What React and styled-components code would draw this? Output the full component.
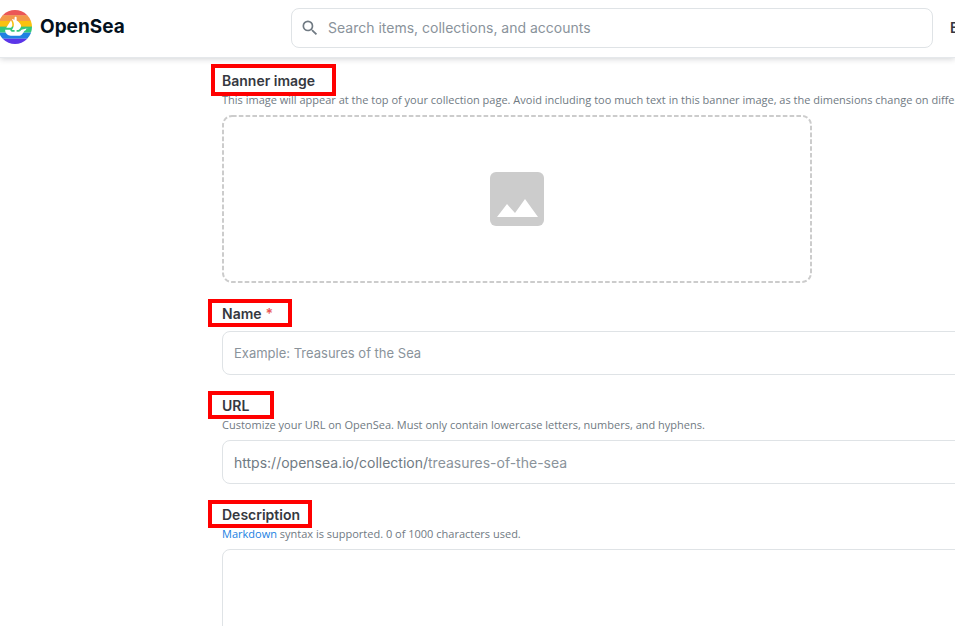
import React from "react";
import styled, { createGlobalStyle } from "styled-components";
import { MdSearch } from "react-icons/md";

const GlobalStyle = createGlobalStyle`
  * {
    box-sizing: border-box;
  }
  body {
    margin: 0;
    overflow: hidden;
    background-color: #ffffff;
    color: #353840;
    font-family: Inter, "Liberation Sans", sans-serif;
    font-size: 14px;
  }
`;

const StyledHeader = styled.header`
  display: flex;
  align-items: center;
  height: 58px;
  padding-bottom: 2px;
  border-bottom: 1px solid #e5e8eb;
  box-shadow: 0 1px 6px rgba(4, 17, 29, 0.18);
`;

const StyledBrand = styled.a`
  display: flex;
  align-items: center;
  flex: 0 0 291px;
  gap: 8px;
  margin-left: -2px;
  margin-right: 2px;
  padding-bottom: 2px;
  color: #04111d;
  font-size: 19px;
  font-weight: 700;
  text-decoration: none;
`;

const StyledSearchWrap = styled.label`
  display: flex;
  align-items: center;
  flex: 1;
  gap: 8px;
  height: 40px;
  padding: 0 8px;
  border: 1px solid #dfe3e6;
  border-radius: 8px;
  color: #707a83;
`;

const StyledInput = styled.input`
  flex: 1;
  min-width: 0;
  padding: 0;
  border: none;
  outline: none;
  background-color: transparent;
  color: #353840;
  font-family: inherit;
  font-size: ${({ $small }) => ($small ? 13 : 14)}px;
  &::placeholder {
    color: #8a939b;
    opacity: 1;
  }
`;

const StyledNav = styled.nav`
  flex: 0 0 22px;
  padding-left: 17px;
  overflow: hidden;
`;

const StyledNavLink = styled.a`
  color: #353840;
  font-weight: 600;
  text-decoration: none;
`;

const StyledMain = styled.main`
  padding: 6px 0 0 222px;
  overflow: hidden;
`;

const StyledForm = styled.form`
  display: flex;
  flex-direction: column;
  gap: 16px;
  min-width: 780px;
`;

const StyledField = styled.div`
  display: flex;
  flex-direction: column;
  align-items: flex-start;
`;

const StyledLabel = styled.label`
  position: relative;
  display: flex;
  align-items: center;
  gap: 4px;
  width: ${({ $width }) => $width}px;
  height: ${({ $tall }) => ($tall ? 32 : 28)}px;
  margin-left: ${({ $tall }) => ($tall ? -11 : -14)}px;
  padding-left: ${({ $tall }) => ($tall ? 7 : 10)}px;
  border: 4px solid #ff0000;
  font-weight: 600;
`;

const StyledRequired = styled.span`
  color: #eb5757;
`;

const StyledHelp = styled.p`
  margin: ${({ $tight }) => ($tight ? -4 : -2)}px 0 7px;
  color: #707a83;
  font-family: "Open Sans", "Liberation Sans", sans-serif;
  font-size: 11px;
  font-weight: 500;
  line-height: 16px;
  white-space: nowrap;
`;

const StyledMarkdownLink = styled.a`
  color: #2081e2;
  text-decoration: none;
`;

const StyledDropzone = styled.button`
  position: relative;
  display: flex;
  align-items: center;
  justify-content: center;
  width: 590px;
  height: 168px;
  padding: 0;
  border: none;
  background-color: transparent;
`;

const StyledDashes = styled.svg`
  position: absolute;
  inset: 0;
  width: 100%;
  height: 100%;
  overflow: visible;

  rect {
    x: 1px;
    y: 1px;
    width: calc(100% - 2px);
    height: calc(100% - 2px);
    fill: none;
    stroke: #cccccc;
    stroke-width: 2px;
    stroke-dasharray: 4.6 2.2;
  }
`;

const StyledInputBox = styled.div`
  display: flex;
  align-items: center;
  align-self: stretch;
  height: 44px;
  margin-top: ${({ $spaced }) => ($spaced ? 4 : 0)}px;
  padding: 0 11px;
  border: 1px solid #dfe3e6;
  border-radius: 8px;
  color: #707a83;
`;

const StyledTextarea = styled.textarea`
  align-self: stretch;
  height: 130px;
  padding: 11px;
  border: 1px solid #dfe3e6;
  border-radius: 8px;
  outline: none;
  font-family: inherit;
  font-size: 14px;
  resize: none;
`;

function Logo() {
  return (
    <svg width="34" height="34" viewBox="0 0 90 90" aria-hidden="true">
      <clipPath id="disc">
        <circle cx="45" cy="45" r="45" />
      </clipPath>
      <g clipPath="url(#disc)">
        <rect width="90" height="15" fill="#eb5757" />
        <rect y="14" width="90" height="16" fill="#f2994a" />
        <rect y="29" width="90" height="16" fill="#f9c10f" />
        <rect y="44" width="90" height="16" fill="#34c77b" />
        <rect y="60" width="90" height="16" fill="#2081e2" />
        <rect y="76" width="90" height="14" fill="#5b35e8" />
      </g>
      <g fill="#ffffff">
        <path d="M22.200 46.500L34.100 27.900c.2-.3.600-.2.700.1 2 4.300 3.700 9.800 2.900 13.200-.4 1.600-1.500 3.900-2.800 5.800-.1.100-.2.200-.4.200H22.500c-.3 0-.5-.4-.3-.7z" />
        <path d="M74.400 49.900v2.900c0 .2-.1.300-.3.400-.9.400-4 1.800-5.300 3.600-3.300 4.600-5.800 11.100-11.400 11.100H33.900c-8.300 0-15-6.700-15-15.100v-.2c0-.2.200-.4.400-.4h13.100c.3 0 .4.200.4.500-.1.900.1 1.700.5 2.500.8 1.600 2.400 2.500 4.100 2.500h6.500v-5h-6.400c-.3 0-.5-.4-.4-.6 2-2.800 5-7.600 5-12.800 0-5.400-2.200-10.700-5.200-14.700-.2-.3 0-.6.400-.5l6.600 1.900v-5.200c0-1.500 1.200-2.700 2.700-2.700s2.700 1.200 2.700 2.700v6.700c5.600 3.400 11.700 9.100 11.700 14.200 0 4.300-2.500 7.500-5.100 10.100-.6.600-1.300.9-2.200.9h-4.400v5h5.600c1.300 0 2.500-.4 3.500-1.300l3.900-3.900 17.600-5.100c.3-.1.500.1.500.4z" />
      </g>
    </svg>
  );
}

function ImageIcon() {
  return (
    <svg width="54" height="54" viewBox="0 0 54 54" aria-hidden="true">
      <rect width="54" height="54" rx="6" fill="#cccccc" />
      <path d="M7 45l10-13 8 9 10-14 13 18z" fill="#ffffff" />
    </svg>
  );
}

function Header() {
  return (
    <StyledHeader>
      <StyledBrand href="#home">
        <Logo />
        OpenSea
      </StyledBrand>
      <StyledSearchWrap>
        <MdSearch size={20} />
        <StyledInput
          type="text"
          aria-label="Search"
          placeholder="Search items, collections, and accounts"
        />
      </StyledSearchWrap>
      <StyledNav>
        <StyledNavLink href="#explore">Explore</StyledNavLink>
      </StyledNav>
    </StyledHeader>
  );
}

function App() {
  return (
    <>
      <GlobalStyle />
      <Header />
      <StyledMain>
        <StyledForm>
          <StyledField>
            <StyledLabel htmlFor="banner" $width={125} $tall>
              Banner image
            </StyledLabel>
            <StyledHelp $tight>
              This image will appear at the top of your collection page. Avoid
              including too much text in this banner image, as the dimensions
              change on different devices.
            </StyledHelp>
            <StyledDropzone id="banner" type="button">
              <StyledDashes aria-hidden="true">
                <rect rx="9" />
              </StyledDashes>
              <ImageIcon />
            </StyledDropzone>
          </StyledField>

          <StyledField>
            <StyledLabel htmlFor="name" $width={84}>
              Name <StyledRequired>*</StyledRequired>
            </StyledLabel>
            <StyledInputBox $spaced>
              <StyledInput
                id="name"
                type="text"
                placeholder="Example: Treasures of the Sea"
                $small
              />
            </StyledInputBox>
          </StyledField>

          <StyledField>
            <StyledLabel htmlFor="url" $width={66}>
              URL
            </StyledLabel>
            <StyledHelp>
              Customize your URL on OpenSea. Must only contain lowercase
              letters, numbers, and hyphens.
            </StyledHelp>
            <StyledInputBox>
              <span>https://opensea.io/collection/</span>
              <StyledInput
                id="url"
                type="text"
                placeholder="treasures-of-the-sea"
              />
            </StyledInputBox>
          </StyledField>

          <StyledField>
            <StyledLabel htmlFor="description" $width={104}>
              Description
            </StyledLabel>
            <StyledHelp>
              <StyledMarkdownLink href="#markdown">Markdown</StyledMarkdownLink>{" "}
              syntax is supported. 0 of 1000 characters used.
            </StyledHelp>
            <StyledTextarea id="description" />
          </StyledField>
        </StyledForm>
      </StyledMain>
    </>
  );
}

export default App;
